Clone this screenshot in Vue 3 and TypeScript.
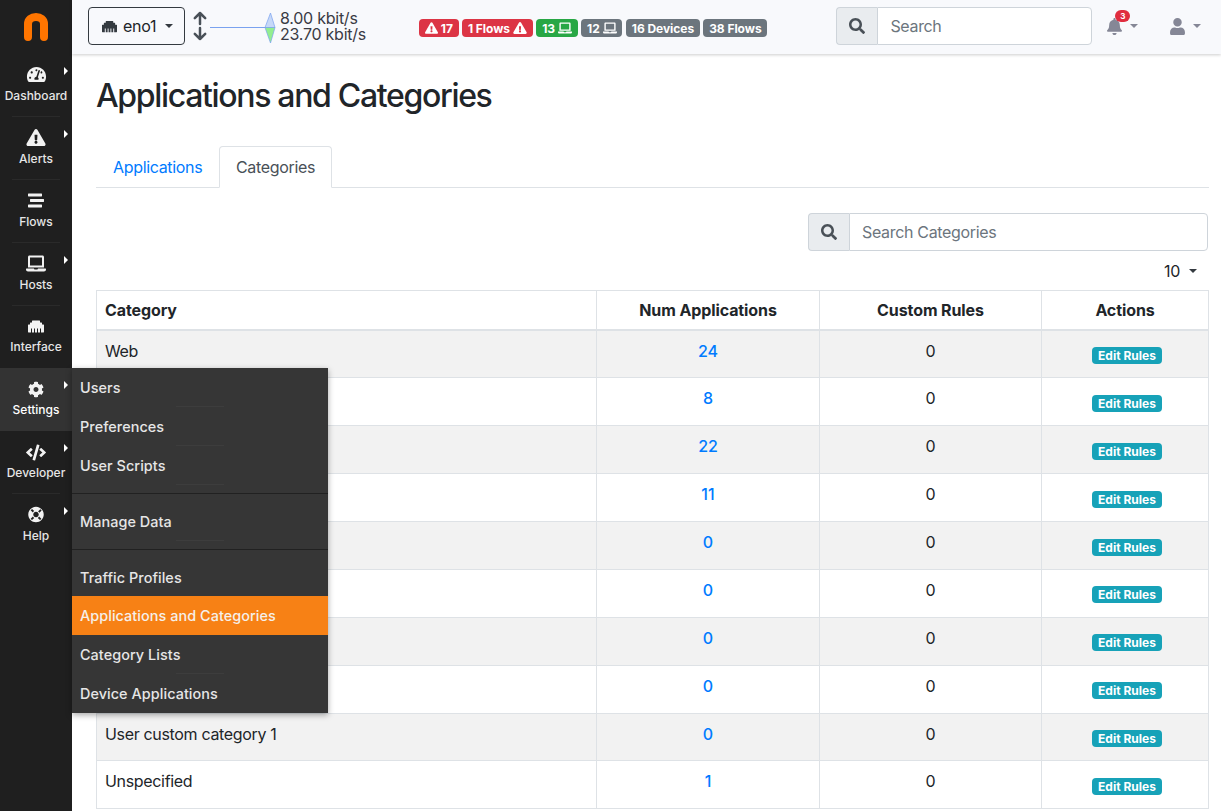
<script setup lang="ts">
const P = {
  search: 'M505 442.7L405.3 343c-4.5-4.5-10.6-7-17-7H372c27.6-35.3 44-79.7 44-128C416 93.1 322.9 0 208 0S0 93.1 0 208s93.1 208 208 208c48.3 0 92.7-16.4 128-44v16.3c0 6.4 2.5 12.5 7 17l99.7 99.7c9.4 9.4 24.6 9.4 33.9 0l28.3-28.3c9.4-9.4 9.4-24.6.1-34zM208 336c-70.7 0-128-57.2-128-128 0-70.7 57.2-128 128-128 70.7 0 128 57.2 128 128 0 70.7-57.2 128-128 128z',
  warn: 'M569.517 440.013C587.975 472.007 564.806 512 527.94 512H48.054c-36.937 0-59.999-40.055-41.577-71.987L246.423 23.985c18.467-32.009 64.72-31.951 83.154 0l239.94 416.028zM288 354c-25.405 0-46 20.595-46 46s20.595 46 46 46 46-20.595 46-46-20.595-46-46-46zm-43.673-165.346l7.418 136c.347 6.364 5.609 11.346 11.982 11.346h48.546c6.373 0 11.635-4.982 11.982-11.346l7.418-136c.375-6.874-5.098-12.654-11.982-12.654h-63.383c-6.884 0-12.356 5.78-11.981 12.654z',
  laptop: 'M624 416H381.54c-.74 19.81-14.71 32-32.74 32H288c-18.69 0-33.02-17.47-32.77-32H16c-8.8 0-16 7.2-16 16v16c0 35.2 28.8 64 64 64h512c35.2 0 64-28.8 64-64v-16c0-8.8-7.2-16-16-16zM576 48c0-26.4-21.6-48-48-48H112C85.6 0 64 21.6 64 48v336h512V48zm-64 272H128V64h384v256z',
  stream: 'M16 128h416c8.84 0 16-7.16 16-16V48c0-8.84-7.16-16-16-16H16C7.16 32 0 39.16 0 48v64c0 8.84 7.16 16 16 16zm480 80H80c-8.84 0-16 7.16-16 16v64c0 8.84 7.16 16 16 16h416c8.84 0 16-7.16 16-16v-64c0-8.84-7.16-16-16-16zm-64 176H16c-8.84 0-16 7.16-16 16v64c0 8.84 7.16 16 16 16h416c8.84 0 16-7.16 16-16v-64c0-8.84-7.16-16-16-16z',
  cog: 'M487.4 315.7l-42.6-24.6c4.3-23.2 4.3-47 0-70.2l42.6-24.6c4.9-2.8 7.1-8.6 5.5-14-11.1-35.6-30-67.8-54.7-94.6-3.8-4.1-10-5.1-14.8-2.3L380.8 110c-17.9-15.4-38.5-27.3-60.8-35.1V25.8c0-5.6-3.9-10.5-9.4-11.7-36.7-8.2-74.3-7.8-109.2 0-5.5 1.2-9.4 6.1-9.4 11.7V75c-22.2 7.9-42.8 19.8-60.8 35.1L88.7 85.5c-4.9-2.8-11-1.9-14.8 2.3-24.7 26.7-43.6 58.9-54.7 94.6-1.7 5.4.6 11.2 5.5 14L67.3 221c-4.3 23.2-4.3 47 0 70.2l-42.6 24.6c-4.9 2.8-7.1 8.6-5.5 14 11.1 35.6 30 67.8 54.7 94.6 3.8 4.1 10 5.1 14.8 2.3l42.6-24.6c17.9 15.4 38.5 27.3 60.8 35.1v49.2c0 5.6 3.9 10.5 9.4 11.7 36.7 8.2 74.3 7.8 109.2 0 5.5-1.2 9.4-6.1 9.4-11.7v-49.2c22.2-7.9 42.8-19.8 60.8-35.1l42.6 24.6c4.9 2.8 11 1.9 14.8-2.3 24.7-26.7 43.6-58.9 54.7-94.6 1.5-5.5-.7-11.3-5.6-14.1zM256 336c-44.1 0-80-35.9-80-80s35.9-80 80-80 80 35.9 80 80-35.9 80-80 80z',
  bell: 'M224 512c35.32 0 63.97-28.65 63.97-64H160.03c0 35.35 28.65 64 63.97 64zm215.39-149.71c-19.32-20.76-55.47-51.99-55.47-154.29 0-77.7-54.48-139.9-127.94-155.16V32c0-17.67-14.32-32-31.98-32s-31.98 14.33-31.98 32v20.84C118.56 68.1 64.08 130.3 64.08 208c0 102.3-36.15 133.53-55.47 154.29-6 6.45-8.66 14.16-8.61 21.71.11 16.4 12.98 32 32.1 32h383.8c19.12 0 32-15.6 32.1-32 .05-7.55-2.61-15.27-8.61-21.71z',
  user: 'M224 256c70.7 0 128-57.3 128-128S294.7 0 224 0 96 57.3 96 128s57.3 128 128 128zm89.6 32h-16.7c-22.2 10.2-46.9 16-72.9 16s-50.6-5.8-72.9-16h-16.7C60.2 288 0 348.2 0 422.4V464c0 26.5 21.5 48 48 48h352c26.5 0 48-21.5 48-48v-41.6c0-74.2-60.2-134.4-134.4-134.4z',
  code: 'M278.9 511.5l-61-17.7c-6.4-1.8-10-8.5-8.2-14.9L346.2 8.7c1.8-6.4 8.5-10 14.9-8.2l61 17.7c6.4 1.8 10 8.5 8.2 14.9L293.8 503.3c-1.9 6.4-8.5 10.1-14.9 8.2zm-114-112.2l43.5-46.4c4.6-4.9 4.3-12.7-.8-17.2L117 256l90.6-79.7c5.1-4.5 5.5-12.3.8-17.2l-43.5-46.4c-4.5-4.8-12.1-5.1-17-.5L3.8 247.2c-5.1 4.7-5.1 12.8 0 17.5l144.1 135.1c4.9 4.6 12.5 4.4 17-.5zm327.2.6l144.1-135.1c5.1-4.7 5.1-12.8 0-17.5L492.1 112.1c-4.8-4.5-12.4-4.3-17 .5L431.6 159c-4.6 4.9-4.3 12.7.8 17.2L523 256l-90.6 79.7c-5.1 4.5-5.5 12.3-.8 17.2l43.5 46.4c4.5 4.9 12.1 5.1 17 .6z',
  ring: 'M256 8C119 8 8 119 8 256s111 248 248 248 248-111 248-248S393 8 256 8zm152.3 87.7c10.5 10.5 19.6 21.6 27.4 33.3l-70.8 70.8c-9.6-18.6-24.9-33.9-43.5-43.5l70.8-70.8c5.500 3.200 11.100 6.700 16.100 10.200zM256 344c-48.600 0-88-39.400-88-88s39.400-88 88-88 88 39.400 88 88-39.400 88-88 88zM129 76.300l70.800 70.800c-18.600 9.600-33.900 24.900-43.500 43.500L85.500 119.800C97.600 103 112 88.500 129 76.300zM85.500 392.200l70.800-70.800c9.600 18.600 24.900 33.900 43.500 43.500L129 435.700c-17-12.200-31.400-26.700-43.500-43.500zm297.500 43.500l-70.800-70.800c18.600-9.600 33.900-24.900 43.500-43.500l70.800 70.800c-12.100 16.800-26.500 31.300-43.500 43.500z',
  gauge: 'M288 32C128.94 32 0 160.94 0 320c0 52.8 14.25 102.26 39.06 144.8 5.61 9.62 16.3 15.2 27.44 15.2h443c11.14 0 21.83-5.58 27.44-15.2C561.75 422.26 576 372.8 576 320c0-159.06-128.94-288-288-288zm0 64c14.71 0 26.58 10.13 30.32 23.65-1.11 2.26-2.64 4.23-3.45 6.67l-9.22 27.67c-5.13 3.49-10.97 6.01-17.64 6.01-17.67 0-32-14.33-32-32S270.33 96 288 96zM96 384c-17.67 0-32-14.33-32-32s14.33-32 32-32 32 14.33 32 32-14.33 32-32 32zm48-160c-17.67 0-32-14.33-32-32s14.33-32 32-32 32 14.33 32 32-14.33 32-32 32zm246.77-72.41l-61.33 184C343.13 347.33 352 364.54 352 384c0 11.72-3.38 22.55-8.88 32H232.88c-5.5-9.45-8.88-20.28-8.88-32 0-33.94 26.5-61.43 59.9-63.59l61.34-184.01c4.17-12.56 17.73-19.45 30.36-15.17 12.57 4.19 19.35 17.79 15.17 30.36zm14.66 57.2l15.52-46.55c3.47-1.29 7.13-2.23 11.05-2.23 17.67 0 32 14.33 32 32s-14.33 32-32 32c-11.38-.01-20.89-6.28-26.57-15.22zM480 384c-17.67 0-32-14.33-32-32s14.33-32 32-32 32 14.33 32 32-14.33 32-32 32z',
  eth: 'M496 192h-48v-48c0-8.8-7.2-16-16-16h-48V80c0-8.8-7.2-16-16-16H144c-8.8 0-16 7.2-16 16v48H80c-8.800 0-16 7.200-16 16v48H16c-8.800 0-16 7.200-16 16v224c0 8.800 7.200 16 16 16h80V320h32v128h64V320h32v128h64V320h32v128h64V320h32v128h80c8.800 0 16-7.200 16-16V208c0-8.800-7.200-16-16-16z',
}

const nav = [
  { label: 'Dashboard', d: P.gauge, vb: '0 0 576 512', w: 21, caret: true, active: false, sep: true },
  { label: 'Alerts', d: P.warn, vb: '0 0 576 512', w: 20, caret: true, active: false, sep: true },
  { label: 'Flows', d: P.stream, vb: '0 0 512 512', w: 16, caret: false, active: false, sep: true },
  { label: 'Hosts', d: P.laptop, vb: '0 0 640 512', w: 20, caret: true, active: false, sep: true },
  { label: 'Interface', d: P.eth, vb: '0 0 512 512', w: 16, caret: false, active: false, sep: false },
  { label: 'Settings', d: P.cog, vb: '0 0 512 512', w: 16, caret: true, active: true, sep: false },
  { label: 'Developer', d: P.code, vb: '0 0 640 512', w: 20, caret: true, active: false, sep: true },
  { label: 'Help', d: P.ring, vb: '0 0 512 512', w: 16, caret: true, active: false, sep: false },
]

const badges = [
  { cls: 'danger', pre: P.warn, text: '17' },
  { cls: 'danger', text: '1 Flows', post: P.warn, vb: '0 0 576 512' },
  { cls: 'success', text: '13', post: P.laptop, vb: '0 0 640 512' },
  { cls: 'secondary', text: '12', post: P.laptop, vb: '0 0 640 512' },
  { cls: 'secondary', text: '16 Devices' },
  { cls: 'secondary', text: '38 Flows' },
]

// The names of rows 2 to 8 lie behind the open Settings menu in the reference.
const rows: [string, number][] = [
  ['Web', 24], ['', 8], ['', 22], ['', 11], ['', 0],
  ['', 0], ['', 0], ['', 0], ['User custom category 1', 0], ['Unspecified', 1],
]
</script>

<template>
  <div class="app">
    <aside class="side">
      <div class="logo">
        <svg width="24" height="28" viewBox="0 0 24 28"><path d="M4 24V11C4 6.500 7.500 4 12 4s8 2.500 8 7V24" fill="none" stroke="#ff7500" stroke-width="8" stroke-linecap="round" /></svg>
      </div>
      <div v-for="n in nav" :key="n.label" class="nav" :class="{ on: n.active }">
        <svg class="nav-ic" :width="n.w" height="17" :viewBox="n.vb"><path :d="n.d" fill="#f2f2f2" /></svg>
        <span>{{ n.label }}</span>
        <i v-if="n.caret" class="tri"></i>
        <b v-if="n.sep" class="sep"></b>
      </div>
    </aside>

    <div class="menu">
      <a class="mi line">Users</a>
      <a class="mi line">Preferences</a>
      <a class="mi line">User Scripts</a>
      <hr />
      <a class="mi line">Manage Data</a>
      <hr />
      <a class="mi">Traffic Profiles</a>
      <a class="mi sel">Applications and Categories</a>
      <a class="mi line">Category Lists</a>
      <a class="mi">Device Applications</a>
    </div>

    <div class="right">
      <header class="top">
        <button class="iface">
          <svg width="17" height="15" viewBox="0 0 512 512"><path :d="P.eth" fill="#343a40" /></svg>
          <span>eno1</span>
          <i class="caret dark"></i>
        </button>
        <svg class="updown" width="14" height="30" viewBox="0 0 14 30" fill="none" stroke="#495057" stroke-width="2.500" stroke-linecap="round" stroke-linejoin="round">
          <path d="M7 2v11M1.800 7.200L7 2l5.200 5.200M7 17v11M1.800 22.800L7 28l5.200-5.200" />
        </svg>
        <svg class="spark" width="66" height="34" viewBox="0 0 66 34">
          <path d="M0 15.500H55" stroke="#7aa2ef" stroke-width="1" fill="none" />
          <path d="M55 15.500L60.500 1 65 15.500z" fill="#c6d8f8" stroke="#7aa2ef" stroke-width=".7" />
          <path d="M55 15.500H65L60.500 31z" fill="#93ee8f" stroke="#7aa2ef" stroke-width=".7" />
        </svg>
        <div class="rate"><div>8.00 kbit/s</div><div>23.70 kbit/s</div></div>
        <div class="badges">
          <span v-for="b in badges" :key="b.text" class="badge" :class="b.cls">
            <svg v-if="b.pre" width="13" height="12" viewBox="0 0 576 512"><path :d="b.pre" fill="#fff" /></svg>
            <span>{{ b.text }}</span>
            <svg v-if="b.post" width="14" height="12" :viewBox="b.vb"><path :d="b.post" fill="#fff" /></svg>
          </span>
        </div>
        <div class="igroup topsearch">
          <span class="prep"><svg width="16" height="16" viewBox="0 0 512 512"><path :d="P.search" fill="#495057" /></svg></span>
          <input placeholder="Search" />
        </div>
        <div class="bell">
          <svg width="15" height="17" viewBox="0 0 448 512"><path :d="P.bell" fill="#858796" /></svg>
          <span class="cnt">3</span>
          <i class="caret grey"></i>
        </div>
        <div class="usr">
          <svg width="15" height="17" viewBox="0 0 448 512"><path :d="P.user" fill="#858796" /></svg>
          <i class="caret grey"></i>
        </div>
      </header>

      <main class="main">
        <h1>Applications and Categories</h1>
        <nav class="tabs">
          <a class="tab link">Applications</a>
          <a class="tab act">Categories</a>
        </nav>
        <div class="filter">
          <div class="igroup tablesearch">
            <span class="prep"><svg width="16" height="16" viewBox="0 0 512 512"><path :d="P.search" fill="#495057" /></svg></span>
            <input placeholder="Search Categories" />
          </div>
        </div>
        <div class="pager"><span>10</span><i class="caret dark"></i></div>
        <table>
          <colgroup><col class="c1" /><col class="c2" /><col class="c3" /><col /></colgroup>
          <thead>
            <tr><th class="l">Category</th><th>Num Applications</th><th>Custom Rules</th><th>Actions</th></tr>
          </thead>
          <tbody>
            <tr v-for="(r, i) in rows" :key="i">
              <td class="l">{{ r[0] }}</td>
              <td><a class="num">{{ r[1] }}</a></td>
              <td>0</td>
              <td class="act-cell"><span class="edit">Edit Rules</span></td>
            </tr>
          </tbody>
        </table>
      </main>
    </div>
  </div>
</template>

<style>
html, body { margin: 0; overflow: hidden; background: #fff; }
</style>

<style scoped>
* { box-sizing: border-box; }
.app { display: flex; width: 1221px; height: 811px; overflow: hidden; position: relative; font-family: Inter, "Noto Sans", sans-serif; color: #212529; font-size: 16px; }
.side { width: 72px; flex: none; background: #1f1f1f; display: flex; flex-direction: column; }
.logo { height: 54px; display: flex; align-items: center; justify-content: center; }
.nav { height: 62.900px; position: relative; display: flex; flex-direction: column; align-items: center; padding-top: 12.200px; color: #e6e6e6; font-size: 12px; line-height: 18px; font-weight: 500; }
.nav-ic { margin-bottom: 3.700px; }
.nav.on { background: #333; color: #fff; }
.tri { position: absolute; left: 64px; top: 13px; border-left: 4px solid #fff; border-top: 4px solid transparent; border-bottom: 4px solid transparent; }
.sep { position: absolute; left: 12px; right: 12px; bottom: 0; height: 1px; background: #2a2a2a; }
.menu { position: absolute; left: 72px; top: 368px; width: 256px; height: 345px; background: #363636; box-shadow: 0 2px 6px rgba(0,0,0,.35); z-index: 5; font-size: 14.400px; font-weight: 500; letter-spacing: .07px; color: #e6e6e6; }
.mi { display: flex; align-items: center; height: 38.900px; padding-left: 8px; position: relative; }
.mi.line::after { content: ""; position: absolute; left: 104px; width: 48px; bottom: 0; height: 1px; background: #3d3d3d; }
.mi.sel { background: #f78115; color: #f5f0ea; }
.menu hr { margin: 8px 0; border: 0; height: 1px; background: #212121; }
.right { flex: 1; min-width: 0; display: flex; flex-direction: column; }
.top { height: 54px; flex: none; background: #f8f9fc; box-shadow: 0 1px 3px rgba(0,0,0,.2); display: flex; align-items: center; padding: 0 0 2px 16px; position: relative; z-index: 2; }
.top > * { flex: none; }
.iface { width: 97px; height: 38px; background: transparent; border: 1px solid #343a40; border-radius: 4px; display: flex; align-items: center; padding: 0 0 0 12px; font: inherit; color: #212529; letter-spacing: -.3px; }
.iface span { margin-left: 5px; }
.caret { display: inline-block; border-top: 4.800px solid; border-left: 4.800px solid transparent; border-right: 4.800px solid transparent; }
.caret.dark { color: #343a40; margin-left: 9px; }
.caret.grey { color: #858796; margin-left: 8px; border-top-width: 4px; border-left-width: 4px; border-right-width: 4px; }
.updown { margin-left: 8px; }
.spark { margin-left: 3px; margin-top: 5px; }
.rate { margin-left: 4px; line-height: 16px; color: #3a3b45; width: 139px; letter-spacing: -.25px; }
.badges { display: flex; gap: 3.500px; margin-top: 4px; }
.badge { height: 18px; border-radius: 4px; color: #fff; font-size: 12px; font-weight: 700; letter-spacing: -.05px; display: flex; align-items: center; gap: 3px; padding: 0 5.800px; white-space: nowrap; }
.badge svg { flex: none; }
.danger { background: #dc3545; }
.success { background: #28a745; }
.secondary { background: #6c757d; }
.igroup { display: flex; height: 38px; }
.prep { width: 41px; flex: none; background: #e9ecef; border: 1px solid #ced4da; border-right: 0; border-radius: 4px 0 0 4px; display: flex; align-items: center; justify-content: center; }
.igroup input { flex: 1; min-width: 0; border: 1px solid #ced4da; border-radius: 0 4px 4px 0; background: #fff; padding: 0 12px; font: inherit; letter-spacing: -.33px; outline: 0; }
.igroup input::placeholder { color: #6c757d; opacity: 1; }
.topsearch { width: 256px; margin-left: 69px; }
.bell { margin-left: 15px; display: flex; align-items: center; position: relative; }
.cnt { position: absolute; left: 8px; top: -8px; width: 15px; height: 12px; border-radius: 6px; background: #e02d3f; color: #fff; font-size: 8px; font-weight: 700; line-height: 12px; text-align: center; }
.usr { margin-left: 32px; display: flex; align-items: center; }
.main { flex: 1; padding: 23px 12px 0 24px; background: #fff; }
h1 { margin: 0; font-size: 32px; line-height: 38.400px; font-weight: 500; letter-spacing: -1.33px; }
.tabs { display: flex; margin-top: 31px; height: 42px; border-bottom: 1px solid #dee2e6; letter-spacing: -.33px; }
.tab { height: 42px; padding: 0 16px; display: flex; align-items: center; border: 1px solid transparent; border-radius: 4px 4px 0 0; }
.tab.link { color: #007bff; width: 123px; }
.tab.act { border-color: #dee2e6 #dee2e6 #fff; color: #495057; background: #fff; }
.filter { margin-top: 25px; display: flex; justify-content: flex-end; }
.tablesearch { width: 400px; margin-right: 1px; }
.pager { height: 24px; margin-top: 8px; display: flex; align-items: center; justify-content: flex-end; padding-right: 12px; letter-spacing: -.3px; }
.pager .caret { margin-left: 9px; }
table { margin-top: 7px; width: 1113px; border-collapse: collapse; table-layout: fixed; }
.c1 { width: 500px; }
.c2 { width: 223px; }
.c3 { width: 222px; }
th, td { border: 1px solid #dee2e6; text-align: center; padding: 0 8px; }
th { height: 39px; font-weight: 700; border-bottom-width: 2px; color: #212529; letter-spacing: -.1px; }
td { height: 47.900px; padding-top: 8px; padding-bottom: 0; vertical-align: top; line-height: 24px; letter-spacing: -.33px; }
.l { text-align: left; }
tbody tr:nth-child(odd) { background: #f2f2f2; }
.num { color: #007bff; font-weight: 500; letter-spacing: 0; }
td.act-cell { vertical-align: middle; padding-top: 0; padding-bottom: 0; letter-spacing: 0; }
.edit { display: inline-block; background: #17a2b8; color: #fff; font-size: 12px; font-weight: 700; line-height: 17px; height: 17px; padding: 0 6px; border-radius: 4px; vertical-align: middle; margin-left: 4px; }
</style>
